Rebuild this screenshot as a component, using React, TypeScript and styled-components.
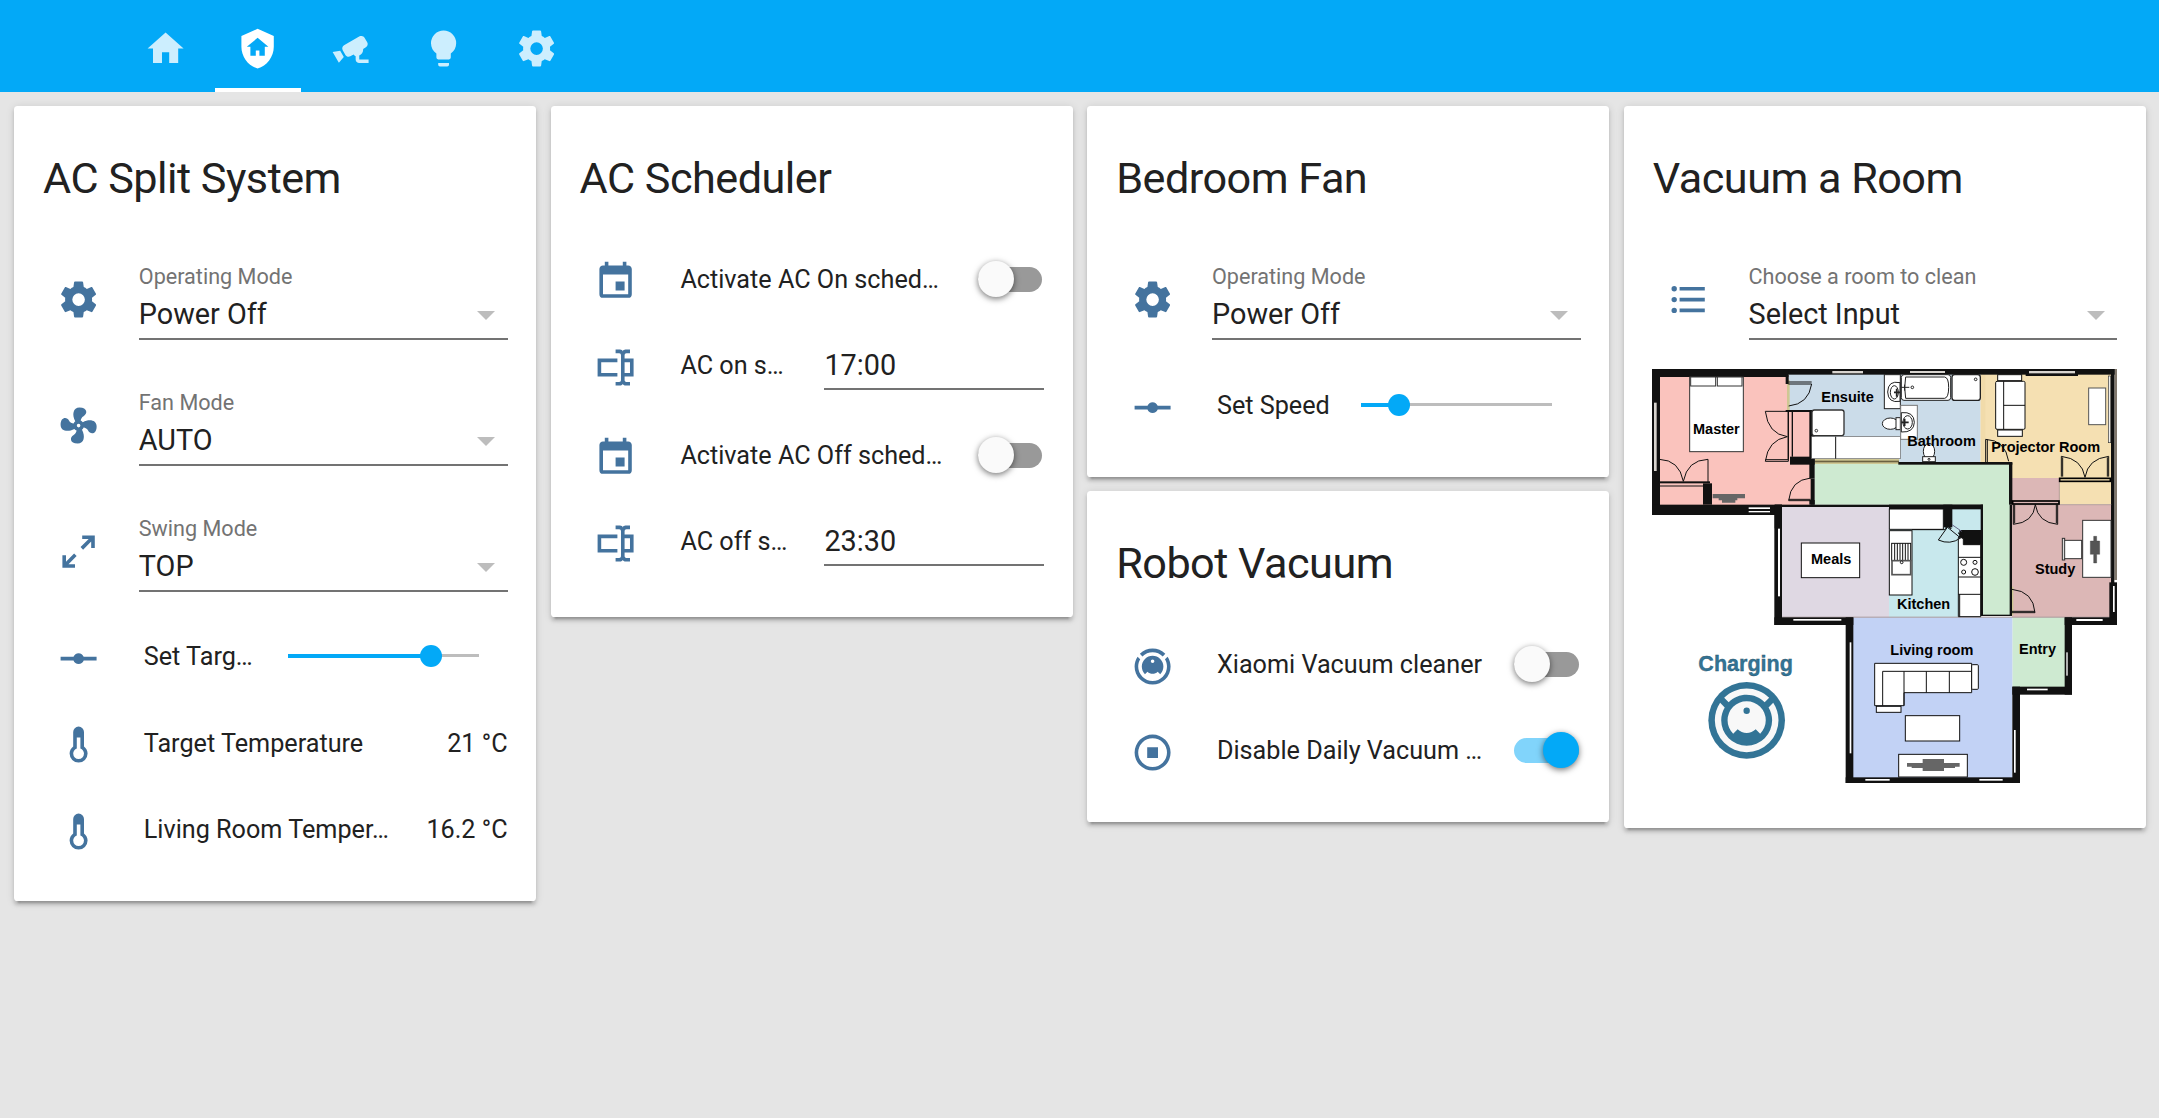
import React from "react";
import styled, { createGlobalStyle } from "styled-components";

const GlobalStyle = createGlobalStyle`
  body {
    margin: 0;
    background: #e5e5e5;
    color: #212121;
    font-family: Roboto, "Noto Sans", sans-serif;
    -webkit-font-smoothing: antialiased;
  }
`;

const icons = {
  home: "M10,20V14H14V20H19V12H22L12,3L2,12H5V20H10Z",
  shieldHome:
    "M11,13H13V16H16V11H18L12,6L6,11H8V16H11V13M12,1L21,5V11C21,16.55 17.16,21.74 12,23C6.84,21.74 3,16.55 3,11V5L12,1Z",
  cctv:
    "M18.15,4.94C17.77,4.91 17.37,5 17,5.2L8.35,10.2C7.39,10.76 7.07,12 7.62,12.94L9.12,15.53C9.67,16.5 10.89,16.82 11.85,16.27L13.65,15.23C13.92,15.69 14.32,16.06 14.81,16.27V18.04C14.81,19.13 15.7,20 16.81,20H22V18.04H16.81V15.87C18.12,15.3 19,14 19,12.5C19,12.39 19,12.28 18.97,12.17L20.5,11.27C21.46,10.72 21.8,9.5 21.24,8.54L19.74,5.94C19.4,5.34 18.79,5 18.15,4.94M6.22,13.17L2,13.87L2.75,15.17L4.75,18.63L5.5,19.93L8.22,16.63L6.22,13.17Z",
  bulb:
    "M12,2A7,7 0 0,0 5,9C5,11.38 6.19,13.47 8,14.74V17A1,1 0 0,0 9,18H15A1,1 0 0,0 16,17V14.74C17.81,13.47 19,11.38 19,9A7,7 0 0,0 12,2M9,21A1,1 0 0,0 10,22H14A1,1 0 0,0 15,21V20H9V21Z",
  gear:
    "M12,15.5A3.5,3.5 0 0,1 8.5,12A3.5,3.5 0 0,1 12,8.5A3.5,3.5 0 0,1 15.5,12A3.5,3.5 0 0,1 12,15.5M19.43,12.97C19.47,12.65 19.5,12.33 19.5,12C19.5,11.67 19.47,11.34 19.43,11L21.54,9.37C21.73,9.22 21.78,8.95 21.66,8.73L19.66,5.27C19.54,5.05 19.27,4.96 19.05,5.05L16.56,6.05C16.04,5.66 15.5,5.32 14.87,5.07L14.5,2.42C14.46,2.18 14.25,2 14,2H10C9.75,2 9.54,2.18 9.5,2.42L9.13,5.07C8.5,5.32 7.96,5.66 7.44,6.05L4.95,5.05C4.73,4.96 4.46,5.05 4.34,5.27L2.34,8.73C2.21,8.95 2.27,9.22 2.46,9.37L4.57,11C4.53,11.34 4.5,11.67 4.5,12C4.5,12.33 4.53,12.65 4.57,12.97L2.46,14.63C2.27,14.78 2.21,15.05 2.34,15.27L4.34,18.73C4.46,18.95 4.73,19.03 4.95,18.95L7.44,17.94C7.96,18.34 8.5,18.68 9.13,18.93L9.5,21.58C9.54,21.82 9.75,22 10,22H14C14.25,22 14.46,21.82 14.5,21.58L14.87,18.93C15.5,18.67 16.04,18.34 16.56,17.94L19.05,18.95C19.27,19.03 19.54,18.95 19.66,18.73L21.66,15.27C21.78,15.05 21.73,14.78 21.54,14.63L19.43,12.97Z",
  fan:
    "M12,11A1,1 0 0,0 11,12A1,1 0 0,0 12,13A1,1 0 0,0 13,12A1,1 0 0,0 12,11M12.5,2C17,2 17.11,5.57 14.75,6.75C13.76,7.24 13.32,8.29 13.13,9.22C13.61,9.42 14.03,9.73 14.35,10.13C18.05,8.13 22.03,8.92 22.03,12.5C22.03,17 18.46,17.1 17.28,14.73C16.78,13.74 15.72,13.3 14.79,13.11C14.59,13.59 14.28,14 13.88,14.34C15.87,18.03 15.08,22 11.5,22C7,22 6.91,18.42 9.27,17.24C10.25,16.75 10.69,15.71 10.89,14.79C10.4,14.59 9.97,14.27 9.65,13.87C5.96,15.85 2,15.07 2,11.5C2,7 5.56,6.89 6.74,9.26C7.24,10.25 8.29,10.68 9.22,10.87C9.41,10.39 9.73,9.97 10.14,9.65C8.15,5.96 8.94,2 12.5,2Z",
  expand:
    "M10,21V19H6.41L10.91,14.5L9.5,13.09L5,17.59V14H3V21H10M14.5,10.91L19,6.41V10H21V3H14V5H17.59L13.09,9.5L14.5,10.91Z",
  rayVertex:
    "M2,11H9.17C9.58,9.83 10.69,9 12,9C13.31,9 14.42,9.83 14.83,11H22V13H14.83C14.42,14.17 13.31,15 12,15C10.69,15 9.58,14.17 9.17,13H2V11Z",
  thermometer:
    "M17,17A5,5 0 0,1 12,22A5,5 0 0,1 7,17C7,15.36 7.79,13.91 9,13V5A3,3 0 0,1 12,2A3,3 0 0,1 15,5V13C16.21,13.91 17,15.36 17,17M11,8V14.17C9.83,14.58 9,15.69 9,17A3,3 0 0,0 12,20A3,3 0 0,0 15,17C15,15.69 14.17,14.58 13,14.17V8H11Z",
  calendar:
    "M19,19H5V8H19M16,1V3H8V1H6V3H5C3.89,3 3,3.89 3,5V19A2,2 0 0,0 5,21H19A2,2 0 0,0 21,19V5C21,3.89 20.1,3 19,3H18V1M17,12H12V17H17V12Z",
  textbox:
    "M17,7H22V17H17V19A1,1 0 0,0 18,20H20V22H17.5C16.95,22 16,21.55 16,21C16,21.55 15.05,22 14.5,22H12V20H14A1,1 0 0,0 15,19V5A1,1 0 0,0 14,4H12V2H14.5C15.05,2 16,2.45 16,3C16,2.45 16.95,2 17.5,2H20V4H18A1,1 0 0,0 17,5V7M2,7H13V9H4V15H13V17H2V7M20,15V9H17V15H20Z",
  vacuum:
    "M12,2C14.65,2 17.19,3.06 19.07,4.93L17.65,6.35C16.15,4.85 14.12,4 12,4C9.88,4 7.84,4.84 6.35,6.35L4.93,4.93C6.81,3.06 9.35,2 12,2M3.66,6.5L5.11,7.94C4.39,9.17 4,10.57 4,12A8,8 0 0,0 12,20A8,8 0 0,0 20,12C20,10.57 19.61,9.17 18.88,7.94L20.34,6.5C21.42,8.12 22,10.04 22,12A10,10 0 0,1 12,22A10,10 0 0,1 2,12C2,10.04 2.58,8.12 3.66,6.5M12,6A6,6 0 0,1 18,12C18,13.59 17.37,15.12 16.24,16.24L14.83,14.83C14.08,15.58 13.06,16 12,16C10.94,16 9.92,15.58 9.17,14.83L7.76,16.24C6.63,15.12 6,13.59 6,12A6,6 0 0,1 12,6M12,8A1,1 0 0,0 11,9A1,1 0 0,0 12,10A1,1 0 0,0 13,9A1,1 0 0,0 12,8Z",
  stopCircle:
    "M12,2A10,10 0 1,0 22,12A10,10 0 0,0 12,2M12,4A8,8 0 1,1 4,12A8,8 0 0,1 12,4M9,9V15H15V9",
  list:
    "M7,5H21V7H7V5M7,13V11H21V13H7M4,4.5A1.5,1.5 0 0,1 5.5,6A1.5,1.5 0 0,1 4,7.5A1.5,1.5 0 0,1 2.5,6A1.5,1.5 0 0,1 4,4.5M4,10.5A1.5,1.5 0 0,1 5.5,12A1.5,1.5 0 0,1 4,13.5A1.5,1.5 0 0,1 2.5,12A1.5,1.5 0 0,1 4,10.5M7,19V17H21V19H7M4,16.5A1.5,1.5 0 0,1 5.5,18A1.5,1.5 0 0,1 4,19.5A1.5,1.5 0 0,1 2.5,18A1.5,1.5 0 0,1 4,16.5Z",
};
type IconName = keyof typeof icons;

const IconSvg = styled.svg`
  display: block;
  width: 43.2px;
  height: 43.2px;
  fill: currentColor;
`;
const Icon = ({ name }: { name: IconName }) => (
  <IconSvg viewBox="0 0 24 24">
    <path fillRule="evenodd" d={icons[name]} />
  </IconSvg>
);

/* ---- toolbar ---- */

const Toolbar = styled.header`
  display: flex;
  gap: 6.4px;
  height: 92px;
  box-sizing: border-box;
  padding-left: 122px;
  background: #03a9f7;
`;
const Tab = styled.button<{ $active?: boolean }>`
  display: flex;
  justify-content: center;
  align-items: center;
  width: 86.4px;
  height: 92px;
  padding: 9px 0 0;
  box-sizing: border-box;
  border: 0;
  border-bottom: 4px solid ${(p) => (p.$active ? "#fff" : "transparent")};
  background: none;
  color: ${(p) => (p.$active ? "#fff" : "rgba(255, 255, 255, 0.8)")};
`;

/* ---- cards ---- */

const Board = styled.main`
  display: flex;
  align-items: flex-start;
  gap: 14.6px;
  box-sizing: border-box;
  min-height: calc(100vh - 92px);
  padding: 14px 0 0 14.2px;
`;
const Column = styled.div`
  display: flex;
  flex-direction: column;
  gap: 14.3px;
  flex: none;
  width: 522px;
`;
const CardBox = styled.section`
  box-sizing: border-box;
  padding: 44px 28.6px 35.3px 28.8px;
  background: #fff;
  border-radius: 3.6px;
  box-shadow:
    0 3.6px 3.6px 0 rgba(0, 0, 0, 0.14),
    0 1.8px 9px 0 rgba(0, 0, 0, 0.12),
    0 5.4px 1.8px -3.6px rgba(0, 0, 0, 0.2);
`;
const CardTitle = styled.h1`
  margin: 0 0 36px;
  font-size: 43.2px;
  line-height: 57.6px;
  font-weight: 400;
  letter-spacing: -0.012em;
  white-space: nowrap;
`;
const Rows = styled.div`
  display: flex;
  flex-direction: column;
  gap: 14.2px;
`;
const Card = ({ title, children }: { title: string; children: React.ReactNode }) => (
  <CardBox>
    <CardTitle>{title}</CardTitle>
    <Rows>{children}</Rows>
  </CardBox>
);

/* ---- entity rows ---- */

const Row = styled.div<{ $extra?: number }>`
  display: flex;
  align-items: center;
  height: 72px;
  padding-bottom: ${(p) => p.$extra ?? 0}px;
`;
const Badge = styled.div`
  display: flex;
  justify-content: center;
  flex: none;
  width: 72px;
  padding-top: 3.6px;
  color: #44739e;
`;
const Name = styled.div`
  flex: 1;
  min-width: 0;
  margin: 0 14.4px 0 28.8px;
  padding-top: 1px;
  font-size: 25.2px;
  line-height: 36px;
  white-space: nowrap;
`;
const State = styled.div`
  flex: none;
  padding-top: 1px;
  font-size: 25.2px;
  line-height: 36px;
`;

const SelectRowBox = styled.div`
  display: flex;
  align-items: center;
  height: 111.6px;
`;
const SelectBadge = styled(Badge)`
  padding-top: 1px;
`;
const SelectField = styled.div`
  flex: 1;
  align-self: flex-start;
  margin: 15.9px 0 0 23.8px;
  padding-bottom: 4.4px;
  border-bottom: 2px solid #737373;
`;
const SelectLabel = styled.div`
  font-size: 21.6px;
  line-height: 36px;
  color: #737373;
`;
const SelectValue = styled.div`
  display: flex;
  justify-content: space-between;
  align-items: center;
  padding-right: 12.6px;
  font-size: 28.8px;
  line-height: 38.6px;
`;
const Caret = styled.span`
  margin-top: 1.4px;
  border: 9px solid transparent;
  border-bottom: 0;
  border-top-color: #bdbdbd;
`;
const SelectRow = ({ icon, label, value }: { icon: IconName; label: string; value: string }) => (
  <SelectRowBox>
    <SelectBadge>
      <Icon name={icon} />
    </SelectBadge>
    <SelectField>
      <SelectLabel>{label}</SelectLabel>
      <SelectValue>
        {value}
        <Caret />
      </SelectValue>
    </SelectField>
  </SelectRowBox>
);

const Track = styled.div`
  flex: none;
  display: flex;
  align-items: center;
  width: 191px;
  height: 22px;
  margin: 0 28.8px 1px 0;
`;
const TrackDone = styled.div`
  height: 4px;
  background: #03a9f7;
`;
const TrackKnob = styled.div`
  flex: none;
  width: 22px;
  height: 22px;
  margin: 0 -11px;
  border-radius: 50%;
  background: #03a9f7;
  z-index: 1;
`;
const TrackRest = styled.div`
  flex: 1;
  height: 3px;
  margin-bottom: 1px;
  background: #bdbdbd;
`;
const SliderRow = ({ name, value }: { name: string; value: number }) => (
  <Row>
    <Badge>
      <Icon name="rayVertex" />
    </Badge>
    <Name>{name}</Name>
    <Track>
      <TrackDone style={{ width: `${value}%` }} />
      <TrackKnob />
      <TrackRest />
    </Track>
  </Row>
);

const ToggleTrack = styled.div<{ $on?: boolean }>`
  flex: none;
  display: flex;
  align-items: center;
  justify-content: ${(p) => (p.$on ? "flex-end" : "flex-start")};
  width: 64.8px;
  height: 25.2px;
  margin: 0 1.8px 0.8px 0;
  border-radius: 13px;
  background: ${(p) => (p.$on ? "#81d4fb" : "#999")};
`;
const ToggleKnob = styled.div<{ $on?: boolean }>`
  flex: none;
  width: 36px;
  height: 36px;
  border-radius: 50%;
  background: ${(p) => (p.$on ? "#03a9f7" : "#fafafa")};
  box-shadow: 0 1.8px 6px 0 rgba(0, 0, 0, 0.55);
`;
const ToggleRow = ({ icon, name, on }: { icon: IconName; name: string; on?: boolean }) => (
  <Row>
    <Badge>
      <Icon name={icon} />
    </Badge>
    <Name>{name}</Name>
    <ToggleTrack $on={on}>
      <ToggleKnob $on={on} />
    </ToggleTrack>
  </Row>
);

const TimeField = styled.div`
  flex: none;
  align-self: flex-start;
  width: 219.8px;
  margin-top: 14.2px;
  border-bottom: 2px solid #737373;
  font-size: 28.8px;
  line-height: 43.6px;
`;
const TimeRow = ({ name, value }: { name: string; value: string }) => (
  <Row $extra={3.6}>
    <Badge>
      <Icon name="textbox" />
    </Badge>
    <Name>{name}</Name>
    <TimeField>{value}</TimeField>
  </Row>
);

const SensorRow = ({ name, value }: { name: string; value: string }) => (
  <Row>
    <Badge>
      <Icon name="thermometer" />
    </Badge>
    <Name>{name}</Name>
    <State>{value}</State>
  </Row>
);

/* ---- floor plan ---- */

const PlanSvg = styled.svg`
  display: block;
  width: 465px;
  height: 415px;
  margin: -0.8px 0 9px -0.8px;
  font-family: "Liberation Sans", Arial, sans-serif;
  font-weight: 700;
`;

type Rect = [number, number, number, number];
/* Each rectangle is given by its left, top, right and bottom edges. */
const Rects = ({ list, ...rest }: { list: Rect[] } & React.SVGProps<SVGGElement>) => (
  <g {...rest}>
    {list.map(([a, b, c, d], i) => (
      <rect key={i} x={a} y={b} width={c - a} height={d - b} />
    ))}
  </g>
);

const WALLS: Rect[] = [
  [36, 27, 1424, 44],
  [36, 27, 445, 51],
  [36, 27, 60, 465],
  [36, 434, 426, 465],
  [404, 434, 426, 505],
  [404, 434, 1029, 441],
  [747, 434, 1029, 448],
  [437, 44, 446, 72],
  [437, 150, 524, 156],
  [508, 150, 524, 356],
  [450, 290, 524, 314],
  [512, 356, 524, 434],
  [508, 420, 524, 434],
  [189, 370, 216, 434],
  [55, 364, 210, 370],
  [403, 465, 426, 795],
  [403, 772, 640, 795],
  [617, 772, 640, 1269],
  [617, 1252, 1140, 1269],
  [1117, 980, 1140, 1269],
  [1117, 980, 1296, 1004],
  [1274, 772, 1296, 1004],
  [1274, 772, 1431, 795],
  [1408, 667, 1431, 795],
  [1413, 27, 1423, 772],
  [1107, 308, 1117, 434],
  [1109, 434, 1116, 768],
  [775, 306, 1117, 314],
  [1022, 434, 1029, 768],
  [1022, 764, 1116, 768],
  [910, 434, 937, 502],
  [958, 510, 1029, 540],
  [970, 510, 1029, 555],
  [1157, 27, 1314, 48],
];

const WINDOWS: Rect[] = [
  [577, 33, 669, 40],
  [810, 33, 915, 39],
  [1167, 33, 1305, 40],
  [42, 128, 50, 333],
];

const GLASS: Rect[] = [
  [326, 442, 390, 447],
  [326, 453, 390, 457],
  [414, 506, 420, 709],
  [460, 777, 604, 782],
  [629, 847, 634, 1180],
  [676, 1257, 749, 1262],
  [1018, 1257, 1088, 1262],
  [1122, 1110, 1127, 1238],
  [1161, 986, 1223, 991],
  [1279, 877, 1283, 947],
  [1309, 777, 1388, 783],
  [1419, 678, 1424, 756],
];

const LABELS: [string, number, number][] = [
  ["Master", 159, 221],
  ["Ensuite", 544, 126],
  ["Bathroom", 802, 258],
  ["Projector Room", 1054, 276],
  ["Meals", 513, 611],
  ["Kitchen", 771, 747],
  ["Study", 1185, 641],
  ["Living room", 751, 885],
  ["Entry", 1137, 882],
];

const FloorPlan = () => (
  <PlanSvg viewBox="36 27 1395 1245">
    <Rects fill="#fac3bd" list={[[55, 45, 515, 440]]} />
    <Rects fill="#cbdce9" list={[[445, 40, 1022, 310]]} />
    <Rects fill="#fac3bd" list={[[445, 152, 515, 310]]} />
    <Rects fill="#f5e0b2" list={[[1022, 40, 1414, 434]]} />
    <Rects fill="#f1dbaa" list={[[1022, 44, 1036, 306]]} />
    <Rects fill="#dcb7b6" list={[[1116, 354, 1258, 434], [1116, 434, 1414, 773]]} />
    <Rects fill="#ceead1" list={[[524, 312, 1110, 434], [1028, 312, 1110, 766], [1117, 772, 1275, 982]]} />
    <Rects fill="#dfd8e3" list={[[425, 440, 747, 773]]} />
    <Rects fill="#c8e8ed" list={[[747, 446, 1024, 773]]} />
    <Rects fill="#c2d2f5" list={[[638, 772, 1117, 1254]]} />
    <Rects fill="none" stroke="#a89a9c" strokeWidth={2} list={[[426, 771, 1410, 772]]} />

    <Rects fill="#cfc793" list={[[441, 60, 449, 150], [524, 296, 777, 312], [1110, 680, 1120, 766]]} />
    <Rects fill="#6b6142" list={[[524, 302, 777, 307]]} />
    <Rects fill="#81786d" list={[[1423, 27, 1431, 660]]} />
    <Rects fill="#111" list={WALLS} />
    <Rects fill="#d8d4cf" list={WINDOWS} />
    <Rects fill="#fff" list={GLASS} />
    <Rects fill="#eee" stroke="#333" strokeWidth={2} list={[[1405, 48, 1412, 248]]} />
    <path d="M1258 434V364M1117 434H1414" stroke="#9c8a8c" strokeWidth={2} />

    {/* wardrobes and doors */}
    <g fill="none" stroke="#111" strokeWidth={3}>
      <path d="M60 378H190M58 298V366M204 298V366M58 298Q118 300 130 364Q142 300 204 298" />
      <path d="M376 154H445V304H376M376 154Q384 222 442 230Q384 240 376 304M376 299H445" />
      <path d="M445 72H515Q506 132 446 138M445 66H515" />
      <path d="M512 354Q452 360 446 422H512M446 418H512" />
      <path d="M445 154V298M457 154V290" strokeWidth={4} />
      <path d="M1037 306V238Q1096 240 1106 304M1042 306V238" />
      <path d="M1264 350V289Q1326 296 1335 352Q1344 296 1406 289V350M1268 350V292M1402 350V292" />
      <path d="M1120 434V493Q1180 488 1186 434Q1194 488 1253 493V434M1124 434V490M1249 434V490" />
      <path d="M1116 688Q1180 694 1185 758H1116M1185 754H1116" />
    </g>
    <g strokeWidth={5} stroke="#000">
      <rect x={1259} y={355} width={152} height={9} fill="#f5e0b2" />
      <rect x={1118} y={423} width={139} height={9} fill="#dcb7b6" />
    </g>

    {/* bedroom furniture */}
    <g fill="#fff" stroke="#333" strokeWidth={3}>
      <rect x={149} y={51} width={161} height={224} />
      <rect x={152} y={51} width={75} height={27} />
      <rect x={232} y={51} width={74} height={27} />
      <rect x={516} y={150} width={96} height={77} rx={7} strokeWidth={4} />
      <circle cx={529} cy={212} r={4} />
    </g>
    <path d="M218 402H315V415H292V421H286V428H246V421H236V415H218Z" fill="#666" />
    <g fill="#fff" stroke="#666" strokeWidth={2}>
      <rect x={515} y={230} width={266} height={66} />
      <path d="M587 230V296" stroke="#111" strokeWidth={3} />
    </g>

    {/* bathroom fixtures */}
    <g fill="#fff" stroke="#222" strokeWidth={3}>
      <rect x={733} y={44} width={48} height={102} />
      <path d="M780 68Q744 60 743 96Q744 130 780 124Z" />
      <ellipse cx={763} cy={97} rx={12} ry={20} fill="none" />
      <path d="M762 97H780M770 86V110" strokeWidth={5} />
      <ellipse cx={751} cy={191} rx={24} ry={17} />
      <rect x={768} y={173} width={13} height={36} />
      <rect x={782} y={136} width={50} height={102} stroke="#777" />
      <path d="M784 158Q822 154 823 187Q822 218 784 216Z" />
      <ellipse cx={803} cy={187} rx={14} ry={20} fill="none" />
      <path d="M784 187H806M794 176V198" strokeWidth={5} />
      <rect x={784} y={44} width={148} height={77} rx={8} />
      <path d="M797 51H914Q926 53 926 82Q926 113 914 115H797Q791 82 797 51Z" />
      <path d="M784 82H808M794 74V92" />
      <circle cx={817} cy={82} r={4} />
      <rect x={936} y={44} width={85} height={77} rx={8} strokeWidth={4} />
      <circle cx={1007} cy={58} r={4} />
      <ellipse cx={867} cy={274} rx={17} ry={24} />
      <rect x={848} y={290} width={38} height={15} />
      <circle cx={867} cy={298} r={3} />
    </g>

    {/* projector room */}
    <g fill="#fff" stroke="#111" strokeWidth={3}>
      <rect x={1073} y={44} width={72} height={18} />
      <rect x={1073} y={210} width={74} height={19} />
      <rect x={1067} y={64} width={88} height={144} rx={4} />
      <path d="M1091 64V208M1091 136H1155" fill="none" />
      <rect x={1346} y={84} width={51} height={110} stroke="#555" />
    </g>

    {/* kitchen and meals */}
    <g fill="#fff" stroke="#111" strokeWidth={3}>
      <rect x={484} y={549} width={175} height={104} />
      <rect x={748} y={447} width={162} height={61} />
      <rect x={748} y={512} width={68} height={193} />
      <rect x={755} y={550} width={57} height={52} />
      <path d="M764 550V600M772 550V600M780 550V600M788 550V600M796 550V600M804 550V600" />
      <rect x={756} y={602} width={56} height={42} stroke="#555" strokeWidth={5} />
      <circle cx={785} cy={607} r={4} />
      <path d="M816 509H928" />
      <path d="M955 530L970 535V554H1022V770H955Z" />
      <path d="M955 592H1022M955 651H1022M955 703H1022M959 703V770" />
      <circle cx={971} cy={607} r={9} />
      <circle cx={1005} cy={607} r={6} />
      <circle cx={971} cy={636} r={6} />
      <circle cx={1005} cy={636} r={10} />
      <path d="M922 502L895 540Q930 556 962 534L930 508Z" fill="#c8e8ed" />
      <path d="M936 494L965 514" stroke="#668" />
    </g>
    <path d="M912 490L934 506M916 506L932 488M955 518L970 536M954 536L970 516" stroke="#111" strokeWidth={4} />

    {/* study */}
    <g fill="#fff" stroke="#333" strokeWidth={3}>
      <rect x={1328} y={481} width={85} height={171} />
      <rect x={1271} y={541} width={54} height={55} />
      <rect x={1267} y={535} width={7} height={65} fill="#ddd" />
    </g>
    <path d="M1361 529H1370V543H1379V583H1370V609H1361V583H1351V543H1361Z" fill="#555" stroke="#333" />

    {/* living room */}
    <g fill="#fff" stroke="#111" strokeWidth={3}>
      <path d="M704 910H995V998H792V1037H704Z" />
      <path d="M728 1037V934H995M792 934V1037M859 934V998M928 934V998" fill="none" />
      <rect x={995} y={914} width={20} height={74} rx={3} />
      <rect x={709} y={1039} width={74} height={18} />
      <rect x={796} y={1067} width={163} height={76} />
      <rect x={776} y={1183} width={206} height={68} />
    </g>
    <path d="M801 1209H848V1197H912V1209H959V1220H945V1224H912V1233H848V1224H815V1220H801Z" fill="#666" />

    <g fill="#000" fontSize={43.5}>
      {LABELS.map(([text, x, y]) => (
        <text key={text} x={x} y={y}>
          {text}
        </text>
      ))}
    </g>

    <text x={175} y={933} fontSize={64.7} fill="#327496" stroke="#2b5468" strokeWidth={1}>
      Charging
    </text>
    <circle cx={320} cy={1081} r={115} fill="#327496" />
    <path
      fillRule="evenodd"
      fill="#f8f8f8"
      transform="translate(320 1081) scale(9.55) translate(-12 -12)"
      d={icons.vacuum}
    />
  </PlanSvg>
);

export default function App() {
  return (
    <>
      <GlobalStyle />
      <Toolbar>
        <Tab><Icon name="home" /></Tab>
        <Tab $active><Icon name="shieldHome" /></Tab>
        <Tab><Icon name="cctv" /></Tab>
        <Tab><Icon name="bulb" /></Tab>
        <Tab><Icon name="gear" /></Tab>
      </Toolbar>
      <Board>
        <Column>
          <Card title="AC Split System">
            <SelectRow icon="gear" label="Operating Mode" value="Power Off" />
            <SelectRow icon="fan" label="Fan Mode" value="AUTO" />
            <SelectRow icon="expand" label="Swing Mode" value="TOP" />
            <SliderRow name="Set Targ…" value={75} />
            <SensorRow name="Target Temperature" value="21 °C" />
            <SensorRow name="Living Room Temper…" value="16.2 °C" />
          </Card>
        </Column>
        <Column>
          <Card title="AC Scheduler">
            <ToggleRow icon="calendar" name="Activate AC On sched…" />
            <TimeRow name="AC on s…" value="17:00" />
            <ToggleRow icon="calendar" name="Activate AC Off sched…" />
            <TimeRow name="AC off s…" value="23:30" />
          </Card>
        </Column>
        <Column>
          <Card title="Bedroom Fan">
            <SelectRow icon="gear" label="Operating Mode" value="Power Off" />
            <SliderRow name="Set Speed" value={20} />
          </Card>
          <Card title="Robot Vacuum">
            <ToggleRow icon="vacuum" name="Xiaomi Vacuum cleaner" />
            <ToggleRow icon="stopCircle" name="Disable Daily Vacuum …" on />
          </Card>
        </Column>
        <Column>
          <Card title="Vacuum a Room">
            <SelectRow icon="list" label="Choose a room to clean" value="Select Input" />
            <FloorPlan />
          </Card>
        </Column>
      </Board>
    </>
  );
}
